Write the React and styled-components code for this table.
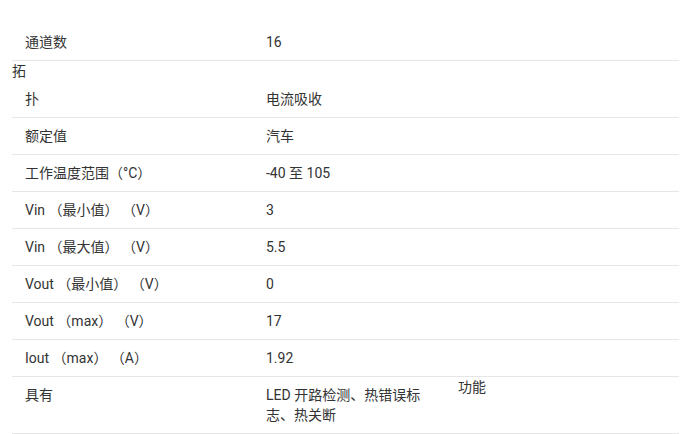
import React from 'react';
import styled, { createGlobalStyle } from 'styled-components';

const GlobalStyle = createGlobalStyle`
  body {
    margin: 0;
    background: #fff;
    font-family: Roboto, "Noto Sans CJK SC", sans-serif;
    color: #333;
  }
`;

const Page = styled.div`
  padding: 24px 11px 0 12px;
`;

const Table = styled.div`
  display: flex;
  flex-direction: column;
`;

const Row = styled.div`
  display: grid;
  grid-template-columns: 241px 192px 1fr;
  border-bottom: 1px solid #e6e6e6;
  font-size: 14px;
  line-height: 20px;
`;

const StrayText = styled.div`
  grid-column: 1 / -1;
  font-size: 14px;
  line-height: 20px;
`;

const Cell = styled.div`
  padding: ${props => (props.raised ? '0' : '8px')} 13px 8px;
`;

const specs = [
  { label: '通道数', value: '16' },
  { label: '扑', value: '电流吸收', stray: '拓' },
  { label: '额定值', value: '汽车' },
  { label: '工作温度范围（°C）', value: '-40 至 105' },
  { label: 'Vin （最小值） （V）', value: '3' },
  { label: 'Vin （最大值） （V）', value: '5.5' },
  { label: 'Vout （最小值） （V）', value: '0' },
  { label: 'Vout （max） （V）', value: '17' },
  { label: 'Iout （max） （A）', value: '1.92' },
  { label: '具有', value: 'LED 开路检测、热错误标志、热关断', extra: '功能' },
];

const App = () => (
  <Page>
    <GlobalStyle />
    <Table>
      {specs.map(spec => (
        <Row key={spec.label}>
          {spec.stray && <StrayText>{spec.stray}</StrayText>}
          <Cell>{spec.label}</Cell>
          <Cell>{spec.value}</Cell>
          <Cell raised>{spec.extra}</Cell>
        </Row>
      ))}
    </Table>
  </Page>
);

export default App;
